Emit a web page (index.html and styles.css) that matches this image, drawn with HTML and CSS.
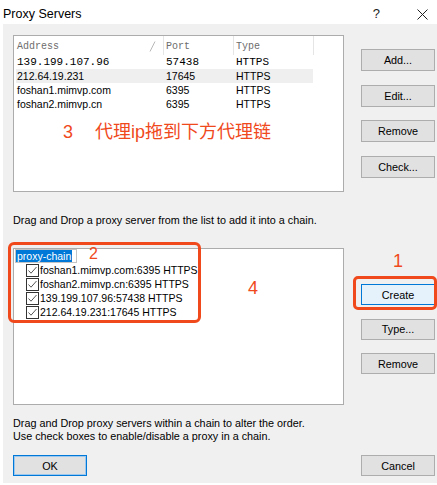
FILE: index.html
```html
<!DOCTYPE html>
<html>
<head>
<meta charset="utf-8">
<link rel="stylesheet" href="styles.css">
</head>
<body>
<div class="titlebar">
  <span class="title">Proxy Servers</span>
  <div class="title-controls">
    <span class="help">?</span>
    <svg class="close" width="11" height="11" viewBox="0 0 11 11"><path d="M0.5 0.5 L10.5 10.5 M10.5 0.5 L0.5 10.5" stroke="#222" stroke-width="1" fill="none"/></svg>
  </div>
</div>
<div class="dialog">
  <section class="pane">
    <div class="listbox">
      <div class="list-head">
        <div class="hcell c-addr">Address<svg class="sort" width="7" height="11" viewBox="0 0 7 11"><path d="M1 10.5 L6 0.5" stroke="#b8b8b8" stroke-width="1" fill="none"/></svg></div>
        <div class="hcell c-port">Port</div>
        <div class="hcell c-type">Type</div>
        <div class="hcell c-fill"></div>
      </div>
      <div class="row mono"><span class="cell c-addr">139.199.107.96</span><span class="cell c-port">57438</span><span class="cell c-type">HTTPS</span></div>
      <div class="row hot"><span class="cell c-addr">212.64.19.231</span><span class="cell c-port">17645</span><span class="cell c-type">HTTPS</span></div>
      <div class="row"><span class="cell c-addr">foshan1.mimvp.com</span><span class="cell c-port">6395</span><span class="cell c-type">HTTPS</span></div>
      <div class="row"><span class="cell c-addr">foshan2.mimvp.cn</span><span class="cell c-port">6395</span><span class="cell c-type">HTTPS</span></div>
      <div class="note note-3"><span class="num">3</span>代理ip拖到下方代理链</div>
    </div>
    <div class="actions">
      <button class="btn">Add...</button>
      <button class="btn">Edit...</button>
      <button class="btn">Remove</button>
      <button class="btn">Check...</button>
    </div>
  </section>

  <p class="hint">Drag and Drop a proxy server from the list to add it into a chain.</p>

  <section class="pane">
    <div class="listbox chain">
      <div class="mark-box"></div>
      <span class="note note-4">4</span>
      <div class="tree-root"><span class="edit"><span class="sel">proxy-chain</span></span><span class="note note-2">2</span></div>
      <div class="tree-item"><span class="check"><svg width="13" height="13" viewBox="0 0 13 13"><rect x="0.5" y="0.5" width="12" height="12" fill="#fff" stroke="#333"/><path d="M2.5 6.5 L5 9.2 L10.5 3" stroke="#555" stroke-width="1" fill="none"/></svg></span>foshan1.mimvp.com:6395 HTTPS</div>
      <div class="tree-item"><span class="check"><svg width="13" height="13" viewBox="0 0 13 13"><rect x="0.5" y="0.5" width="12" height="12" fill="#fff" stroke="#333"/><path d="M2.5 6.5 L5 9.2 L10.5 3" stroke="#555" stroke-width="1" fill="none"/></svg></span>foshan2.mimvp.cn:6395 HTTPS</div>
      <div class="tree-item"><span class="check"><svg width="13" height="13" viewBox="0 0 13 13"><rect x="0.5" y="0.5" width="12" height="12" fill="#fff" stroke="#333"/><path d="M2.5 6.5 L5 9.2 L10.5 3" stroke="#555" stroke-width="1" fill="none"/></svg></span>139.199.107.96:57438 HTTPS</div>
      <div class="tree-item"><span class="check"><svg width="13" height="13" viewBox="0 0 13 13"><rect x="0.5" y="0.5" width="12" height="12" fill="#fff" stroke="#333"/><path d="M2.5 6.5 L5 9.2 L10.5 3" stroke="#555" stroke-width="1" fill="none"/></svg></span>212.64.19.231:17645 HTTPS</div>
    </div>
    <div class="actions chain-actions">
      <div class="note note-1">1</div>
      <button class="btn create">Create</button>
      <button class="btn">Type...</button>
      <button class="btn">Remove</button>
    </div>
  </section>

  <p class="hint hint-two">Drag and Drop proxy servers within a chain to alter the order.<br>Use check boxes to enable/disable a proxy in a chain.</p>

  <div class="footer">
    <button class="btn ok">OK</button>
    <button class="btn">Cancel</button>
  </div>
</div>
</body>
</html>
```
FILE: styles.css
```css
* { box-sizing: border-box; }
html, body { margin: 0; padding: 0; }
body {
  width: 437px;
  height: 485px;
  overflow: hidden;
  background: #fff;
  font-family: "Liberation Sans", Arial, sans-serif;
  font-size: 10.8px;
  color: #000;
}

.titlebar {
  height: 24px;
  padding: 4px 9px 0 3px;
  display: flex;
  align-items: center;
  justify-content: space-between;
}
.title { font-size: 12.5px; line-height: 14px; }
.title-controls { display: flex; align-items: center; gap: 37px; }
.help { font-size: 13px; line-height: 14px; color: #222; }
.close { display: block; }

.dialog {
  margin-left: 3px;
  height: 459px;
  background: #f0f0f0;
  padding: 11px 0 0 10px;
}

.pane { display: flex; gap: 17px; height: 157px; }

.listbox {
  position: relative;
  width: 331px;
  height: 157px;
  background: #fff;
  border: 1px solid #acacac;
}

.list-head { display: flex; height: 19px; }
.hcell {
  position: relative;
  height: 19px;
  line-height: 17px;
  padding-top: 2px;
  padding-left: 3px;
  border-right: 1px solid #e5e5e5;
  font-family: "Liberation Mono", "Courier New", monospace;
  font-size: 10px;
  color: #6d6d6d;
}
.hcell.c-addr { width: 150px; }
.hcell.c-port { width: 70px; padding-left: 2px; }
.hcell.c-type { width: 80px; padding-left: 2px; }
.hcell.c-fill { flex: 1; border-right: none; }
.sort { position: absolute; left: 135px; top: 5px; }

.row { display: flex; margin-left: 2px; width: 297px; height: 14px; line-height: 14px; font-size: 10.5px; }
.row.hot { background: #efefef; }
.row.mono { font-family: "Liberation Mono", "Courier New", monospace; font-size: 11px; }
.cell { display: block; white-space: nowrap; }
.cell.c-addr { width: 147px; padding-left: 1px; }
.cell.c-port { width: 70px; padding-left: 3px; }
.cell.c-type { width: 80px; padding-left: 3px; }

.note {
  color: #f0491c;
  font-family: "Liberation Sans", "Noto Sans CJK SC", sans-serif;
  font-size: 18px;
  line-height: 18px;
}
.note-3 { margin-top: 12px; padding-left: 49px; white-space: nowrap; }
.note-3 .num { margin-right: 22px; }

.actions { display: flex; flex-direction: column; gap: 13.7px; padding-top: 14px; width: 74px; }

.btn {
  display: block;
  width: 74px;
  height: 22px;
  padding: 0;
  margin: 0;
  background: #e1e1e1;
  border: 1px solid #adadad;
  border-radius: 0;
  font-family: "Liberation Sans", Arial, sans-serif;
  font-size: 10.8px;
  color: #000;
}

.hint { margin: 21px 0 0 0; line-height: 14px; white-space: nowrap; }
.hint + .pane { margin-top: 21px; }
.hint-two { margin-top: 11.5px; line-height: 13px; }

/* chain list */
.tree-root { display: flex; align-items: flex-start; height: 14px; padding-left: 1px; }
.edit {
  display: block;
  width: 62px;
  height: 14px;
  border: 1px solid #c4c4c4;
}
.sel {
  display: inline-block;
  height: 12px;
  line-height: 12px;
  padding: 0 1px;
  background: #0078d7;
  color: #fff;
  font-size: 10.5px;
}
.note-2 {
  position: relative;
  top: -2px;
  margin-left: 12px;
  font-size: 16px;
  line-height: 14px;
}
.tree-item {
  display: flex;
  align-items: center;
  height: 14px;
  padding-left: 12px;
  font-size: 10.5px;
  white-space: nowrap;
}
.check { display: block; width: 13px; height: 13px; margin-right: 1px; }
.check svg { display: block; }

.mark-box {
  position: absolute;
  left: -6px;
  top: -7px;
  width: 193px;
  height: 81px;
  border: 3px solid #f0491c;
  border-radius: 6px;
}
.note-4 { position: absolute; left: 234px; top: 30px; }

.chain-actions { padding-top: 0; gap: 13.5px; }
.chain-actions .btn { height: 21px; }
.note-1 { height: 22.5px; line-height: 26px; text-align: center; }
.btn.create { position: relative; background: #e5f1fb; border-color: #0078d7; }
.btn.create::after {
  content: "";
  position: absolute;
  left: -9px;
  right: -3px;
  top: -9px;
  bottom: -6px;
  border: 3px solid #f0491c;
  border-radius: 5px;
}

.footer {
  display: flex;
  justify-content: space-between;
  width: 422px;
  margin-top: 12.5px;
}
.footer .btn { height: 21px; }
.btn.ok { border-color: #0078d7; box-shadow: inset 0 0 0 1px #9cc8f0; }
```
